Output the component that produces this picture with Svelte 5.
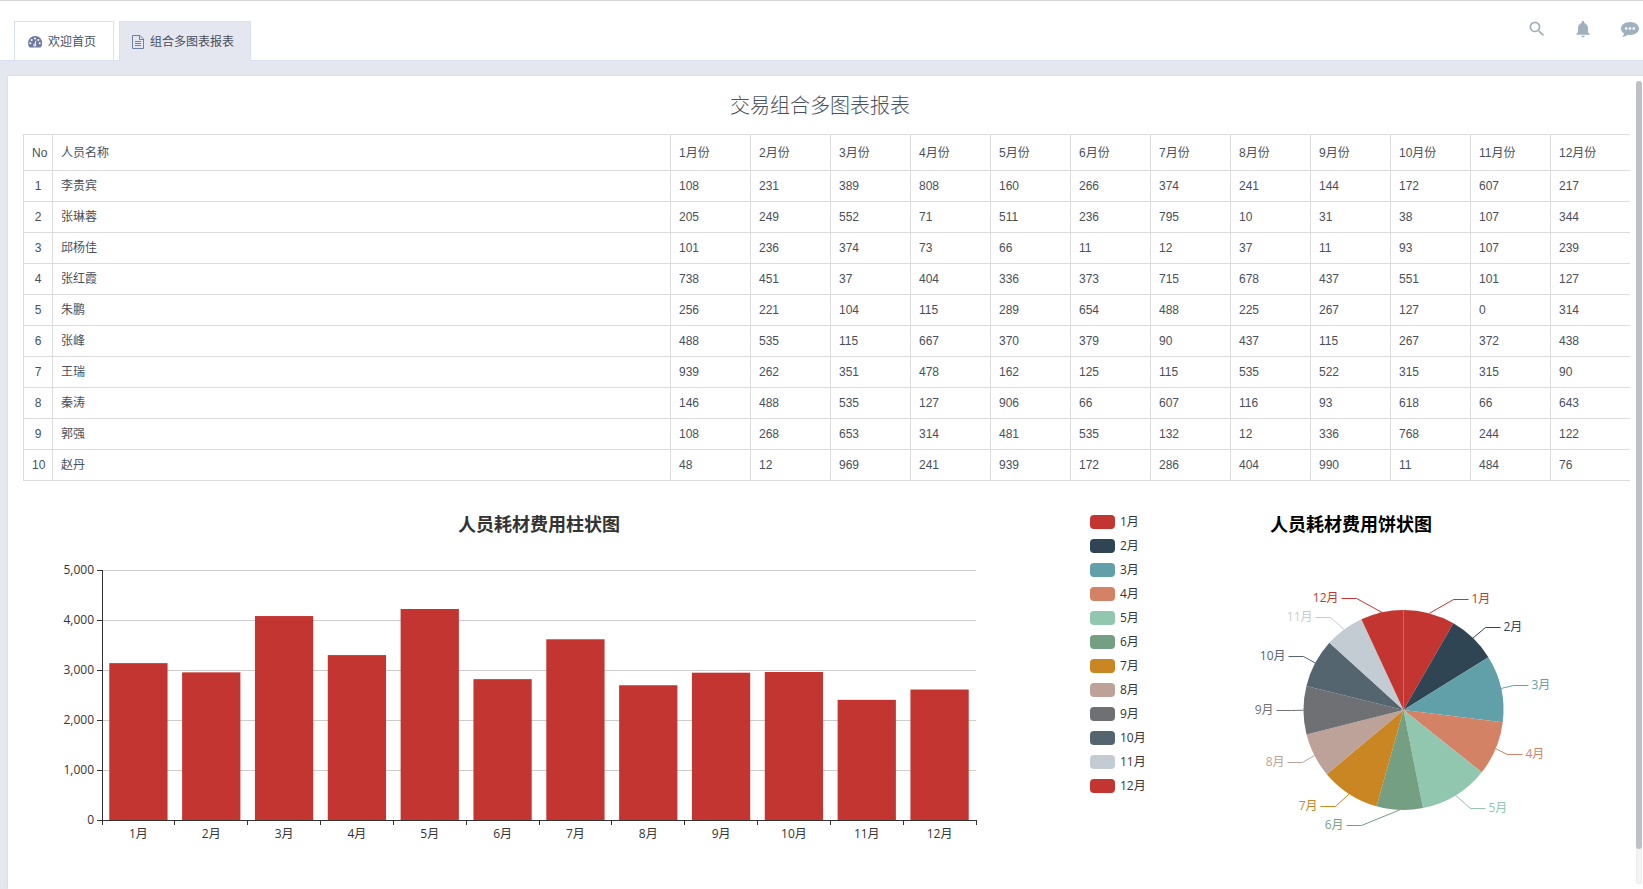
<script lang="ts">
	const people = [
		{ name: '李贵宾', values: [108, 231, 389, 808, 160, 266, 374, 241, 144, 172, 607, 217] },
		{ name: '张琳蓉', values: [205, 249, 552, 71, 511, 236, 795, 10, 31, 38, 107, 344] },
		{ name: '邱杨佳', values: [101, 236, 374, 73, 66, 11, 12, 37, 11, 93, 107, 239] },
		{ name: '张红霞', values: [738, 451, 37, 404, 336, 373, 715, 678, 437, 551, 101, 127] },
		{ name: '朱鹏', values: [256, 221, 104, 115, 289, 654, 488, 225, 267, 127, 0, 314] },
		{ name: '张峰', values: [488, 535, 115, 667, 370, 379, 90, 437, 115, 267, 372, 438] },
		{ name: '王瑞', values: [939, 262, 351, 478, 162, 125, 115, 535, 522, 315, 315, 90] },
		{ name: '秦涛', values: [146, 488, 535, 127, 906, 66, 607, 116, 93, 618, 66, 643] },
		{ name: '郭强', values: [108, 268, 653, 314, 481, 535, 132, 12, 336, 768, 244, 122] },
		{ name: '赵丹', values: [48, 12, 969, 241, 939, 172, 286, 404, 990, 11, 484, 76] }
	];

	// dx/dy: elbow of the label line, measured from the pie centre
	const months = [
		{ color: '#c23531', dx: 50, dy: -111 },
		{ color: '#2f4554', dx: 82, dy: -83 },
		{ color: '#61a0a8', dx: 110, dy: -25 },
		{ color: '#d48265', dx: 104, dy: 44 },
		{ color: '#91c7ae', dx: 67, dy: 98 },
		{ color: '#749f83', dx: -42, dy: 115 },
		{ color: '#ca8622', dx: -68, dy: 96 },
		{ color: '#bda29a', dx: -101, dy: 52 },
		{ color: '#6e7074', dx: -112, dy: 0 },
		{ color: '#546570', dx: -100, dy: -54 },
		{ color: '#c4ccd3', dx: -73, dy: -93 },
		{ color: '#c23531', dx: -47, dy: -112 }
	];

	const totals = months.map((_, i) => people.reduce((sum, p) => sum + p.values[i], 0));
	const grandTotal = totals.reduce((a, b) => a + b, 0);

	// bar chart
	const grid = { left: 94, right: 94, top: 60, height: 250 };
	const axisMax = 5000;
	const ticks = [0, 1000, 2000, 3000, 4000, 5000];
	const bottom = grid.top + grid.height;
	let chartWidth = $state(1062);
	let plotWidth = $derived(chartWidth - grid.left - grid.right);
	let band = $derived(plotWidth / months.length);
	const yOf = (v: number) => bottom - (v / axisMax) * grid.height;
	const crisp = (v: number) => Math.floor(v) + 0.5;

	// pie chart
	const cx = 253.5;
	const cy = 200;
	const r = 100;
	const point = (angle: number) => `${cx + r * Math.sin(angle)} ${cy - r * Math.cos(angle)}`;

	let acc = 0;
	const slices = months.map((m, i) => {
		const start = (acc / grandTotal) * Math.PI * 2;
		acc += totals[i];
		const end = (acc / grandTotal) * Math.PI * 2;
		const side = m.dx > 0 ? 1 : -1;
		const x = cx + m.dx;
		const y = cy + m.dy;
		return {
			label: `${i + 1}月`,
			color: m.color,
			path: `M${cx} ${cy}L${point(start)}A${r} ${r} 0 0 1 ${point(end)}Z`,
			line: `M${point((start + end) / 2)}L${x} ${y + 0.5}H${x + 15 * side}`,
			textX: x + 18 * side,
			textY: y + 4,
			anchor: side > 0 ? 'start' : 'end'
		};
	});
</script>

<div class="page">
	<header class="header">
		<nav class="tabs">
			<a class="tab" href="#home">
				<svg width="14" height="12" viewBox="0 0 14 12" aria-hidden="true">
					<path
						fill="#6b7a9e"
						d="M7 0a7 7 0 0 0-7 7c0 1.5.4 2.800 1.100 4 .2.3.4.4.7.4h10.400c.3 0 .5-.1.7-.4A7 7 0 0 0 7 0z"
					/>
					<g fill="#fff">
						<circle cx="2.300" cy="7.300" r="1" />
						<circle cx="3.700" cy="4" r="1" />
						<circle cx="7" cy="2.500" r="1" />
						<circle cx="10.300" cy="4" r="1" />
						<circle cx="11.700" cy="7.300" r="1" />
						<circle cx="6.800" cy="8.900" r="1.500" />
					</g>
					<path stroke="#fff" d="M6.900 8.800L7.900 4.800" />
					<circle cx="6.800" cy="8.900" r=".6" fill="#6b7a9e" />
				</svg>
				<span>欢迎首页</span>
			</a>
			<a class="tab active" href="#report" aria-current="page">
				<svg width="12" height="14" viewBox="0 0 12 14" fill="none" stroke="#6b7fa8" aria-hidden="true">
					<path d="M.5.5h7.500L11.500 4v9.500H.5zM7.500.5v4h4M3 6.500h6M3 8.500h6M3 10.500h6" />
				</svg>
				<span>组合多图表报表</span>
			</a>
		</nav>
		<div class="actions">
			<button type="button" aria-label="搜索">
				<svg width="20" height="20" viewBox="0 0 24 24">
					<path
						d="M15.5 14h-.79l-.28-.27A6.471 6.471 0 0 0 16 9.500 6.500 6.500 0 1 0 9.500 16c1.610 0 3.090-.59 4.230-1.570l.27.28v.79l5 4.990L20.490 19l-4.990-5zm-6 0C7.010 14 5 11.990 5 9.500S7.010 5 9.500 5 14 7.010 14 9.500 11.990 14 9.500 14z"
					/>
				</svg>
			</button>
			<button type="button" aria-label="通知">
				<svg width="20" height="20" viewBox="0 0 24 24">
					<path
						d="M12 22c1.100 0 2-.9 2-2h-4c0 1.100.89 2 2 2zm6-6v-5c0-3.070-1.640-5.640-4.500-6.320V4c0-.83-.67-1.500-1.500-1.500s-1.500.67-1.500 1.500v.68C7.630 5.360 6 7.920 6 11v5l-2 2v1h16v-1l-2-2z"
					/>
				</svg>
			</button>
			<button type="button" aria-label="消息">
				<svg width="20" height="20" viewBox="0 0 20 20">
					<path
						d="M11 3c5 0 9 2.900 9 6.500S16 16 11 16c-.8 0-1.600-.1-2.300-.2C7.300 17 5.600 17.700 3.700 17.900c-.3 0-.4-.3-.2-.5.8-.8 1.300-1.600 1.500-2.900C3.100 13.300 2 11.500 2 9.500 2 5.900 6 3 11 3z"
					/>
					<g fill="#fff">
						<circle cx="7.200" cy="9.500" r="1.300" />
						<circle cx="11" cy="9.500" r="1.300" />
						<circle cx="14.800" cy="9.500" r="1.300" />
					</g>
				</svg>
			</button>
		</div>
	</header>

	<main class="card">
		<h1>交易组合多图表报表</h1>

		<table>
			<colgroup>
				<col class="col-no" />
				<col />
				{#each months as _}
					<col class="col-month" />
				{/each}
			</colgroup>
			<thead>
				<tr>
					<th class="no">No</th>
					<th>人员名称</th>
					{#each months as _, i}
						<th>{i + 1}月份</th>
					{/each}
				</tr>
			</thead>
			<tbody>
				{#each people as person, i}
					<tr>
						<td class="no">{i + 1}</td>
						<td>{person.name}</td>
						{#each person.values as value}
							<td>{value}</td>
						{/each}
					</tr>
				{/each}
			</tbody>
		</table>

		<div class="charts">
			<div class="bar-chart" bind:clientWidth={chartWidth}>
				<svg width={chartWidth} height="370">
					<text class="chart-title" x={chartWidth / 2} y="21" text-anchor="middle">人员耗材费用柱状图</text>
					{#each ticks as tick}
						{#if tick > 0}
							<path
								stroke="#ccc"
								d="M{grid.left} {crisp(yOf(tick))}H{grid.left + plotWidth}"
							/>
						{/if}
						<path stroke="#333" d="M{grid.left - 5} {crisp(yOf(tick))}H{grid.left}" />
						<text x={grid.left - 8} y={yOf(tick) + 4} text-anchor="end">
							{tick.toLocaleString('en-US')}
						</text>
					{/each}
					{#each totals as total, i}
						<rect
							x={grid.left + band * (i + 0.1)}
							y={yOf(total)}
							width={band * 0.8}
							height={bottom - yOf(total)}
							fill="#c23531"
						/>
						<text x={grid.left + band * (i + 0.5)} y={bottom + 18} text-anchor="middle">{i + 1}月</text>
					{/each}
					<path
						stroke="#333"
						fill="none"
						d="M{grid.left + 0.5} {grid.top}V{bottom + 0.5}H{grid.left + plotWidth + 1}"
					/>
					{#each { length: months.length + 1 } as _, i}
						<path stroke="#333" d="M{crisp(grid.left + band * i)} {bottom}v5" />
					{/each}
				</svg>
			</div>

			<div class="pie-chart">
				<ul class="legend">
					{#each slices as slice}
						<li><i style:background={slice.color}></i>{slice.label}</li>
					{/each}
				</ul>
				<svg width="482" height="370">
					<text class="chart-title dark" x="201" y="21" text-anchor="middle">人员耗材费用饼状图</text>
					{#each slices as slice}
						<path d={slice.line} stroke={slice.color} fill="none" />
						<path d={slice.path} fill={slice.color} />
						<text x={slice.textX} y={slice.textY} text-anchor={slice.anchor} fill={slice.color}>
							{slice.label}
						</text>
					{/each}
				</svg>
			</div>
		</div>

		<div class="scrollbar"><div class="thumb"></div></div>
	</main>
</div>

<style>
	:global(body) {
		background: #e4e7f0;
	}
	.page {
		display: flex;
		flex-direction: column;
		height: 100vh;
		overflow: hidden;
		color: #48505c;
		font: 12px/18px 'Liberation Sans', Arial, 'Noto Sans CJK SC', sans-serif;
	}
	.header {
		display: flex;
		justify-content: space-between;
		box-sizing: border-box;
		height: 61px;
		flex: none;
		padding: 0 4px 0 14px;
		background: #fff;
		border-top: 1px solid #d5d5d5;
		border-bottom: 1px solid #d8e1ef;
	}
	.tabs {
		display: flex;
		gap: 5px;
		margin-top: 20px;
	}
	.tab {
		display: flex;
		align-items: center;
		gap: 6px;
		padding: 2px 17px 0 13px;
		border: 1px solid #d8e1ef;
		border-bottom: 0;
		background: #fff;
		color: #48505c;
		text-decoration: none;
	}
	.tab.active {
		margin-bottom: -1px;
		padding: 1px 16px 0 12px;
		background: #e4e7f0;
	}
	.actions {
		display: flex;
		align-items: flex-start;
		gap: 26px;
		padding-top: 18px;
	}
	button {
		padding: 0;
		border: 0;
		background: none;
		cursor: pointer;
	}
	button svg {
		display: block;
		fill: #9fb0bf;
	}
	.card {
		position: relative;
		flex: 1;
		margin: 15px 0 0 8px;
		padding-right: 11px;
		background: #fff;
		box-shadow: 0 0 2px rgba(0, 0, 0, 0.1);
	}
	h1 {
		margin: 0;
		padding: 15px 0 13px;
		font-size: 20px;
		line-height: 30px;
		font-weight: 300;
		text-align: center;
	}
	table {
		width: calc(100% - 17px);
		margin-left: 15px;
		table-layout: fixed;
		border-collapse: separate;
		border-spacing: 0;
		border-bottom: 1px solid #dcdcdc;
	}
	.col-no {
		width: 29px;
	}
	.col-month {
		width: 80px;
	}
	th,
	td {
		height: 30px;
		padding: 0 8px;
		border-top: 1px solid #dcdcdc;
		border-left: 1px solid #dcdcdc;
		font-weight: 400;
		text-align: left;
		white-space: nowrap;
	}
	th {
		height: 35px;
	}
	td.no {
		text-align: center;
	}
	.charts {
		display: grid;
		grid-template-columns: 1fr 562px;
		margin-top: 29px;
		font-family: 'Open Sans', 'Noto Sans CJK SC', sans-serif;
		color: #333;
	}
	.bar-chart {
		min-width: 0;
	}
	.charts svg {
		display: block;
	}
	.charts text {
		font-size: 12px;
	}
	.bar-chart text {
		fill: #333;
	}
	.charts .chart-title {
		font-size: 18px;
		font-weight: 700;
	}
	.dark {
		fill: #000;
	}
	.pie-chart {
		display: flex;
	}
	.legend {
		display: flex;
		flex-direction: column;
		gap: 10px;
		width: 60px;
		margin: 0;
		padding: 5px 0 0 20px;
		list-style: none;
	}
	.legend li {
		display: flex;
		align-items: center;
		gap: 5px;
		height: 14px;
	}
	.legend i {
		width: 25px;
		height: 14px;
		border-radius: 4px;
	}
	.scrollbar {
		position: absolute;
		top: 5px;
		right: 1px;
		bottom: 5px;
		width: 6px;
		border-radius: 3px;
		background: #f4f4f4;
		box-shadow: inset 0 0 2px rgba(0, 0, 0, 0.1);
	}
	.thumb {
		height: 95.6%;
		border-radius: 3px;
		background: #bfc0c6;
	}
</style>
